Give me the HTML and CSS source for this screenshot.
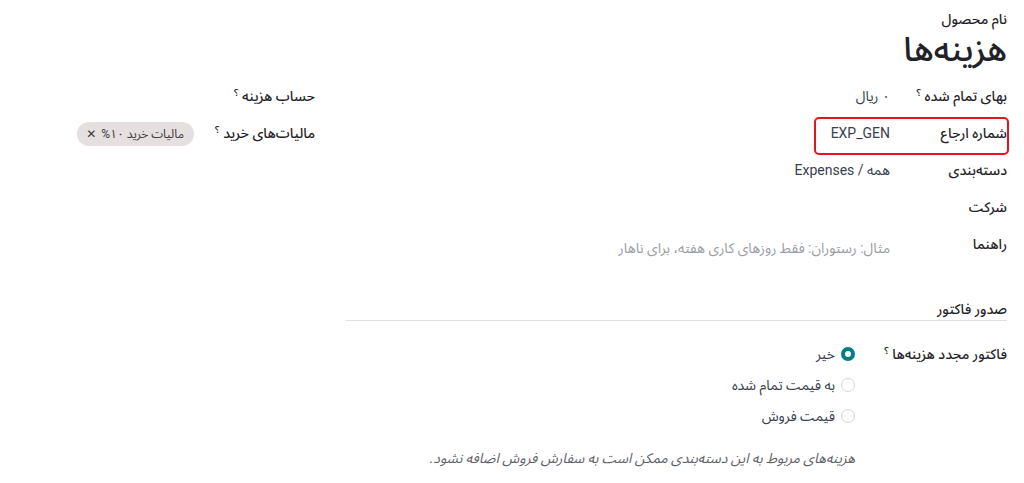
FILE: index.html
```html
<!DOCTYPE html>
<html lang="fa" dir="rtl">
<head>
<meta charset="utf-8">
<link rel="stylesheet" href="styles.css">
</head>
<body>
<div class="sheet">
  <div class="title">
    <div class="title-label">نام محصول</div>
    <h1 class="title-name">هزینه‌ها</h1>
  </div>
  <div class="groups">
    <div class="group group-main">
      <div class="row">
        <div class="lbl">بهای تمام شده <sup class="help">؟</sup></div>
        <div class="val">۰ ریال</div>
      </div>
      <div class="row row-hl">
        <div class="lbl">شماره ارجاع</div>
        <div class="val">EXP_GEN</div>
      </div>
      <div class="row">
        <div class="lbl">دسته‌بندی</div>
        <div class="val">همه / Expenses</div>
      </div>
      <div class="row">
        <div class="lbl">شرکت</div>
        <div class="val"></div>
      </div>
      <div class="row">
        <div class="lbl">راهنما</div>
        <div class="val placeholder">مثال: رستوران: فقط روزهای کاری هفته، برای ناهار</div>
      </div>
    </div>
    <div class="group group-side">
      <div class="row">
        <div class="lbl">حساب هزینه <sup class="help">؟</sup></div>
        <div class="val"></div>
      </div>
      <div class="row">
        <div class="lbl">مالیات‌های خرید <sup class="help">؟</sup></div>
        <div class="val"><span class="tag">مالیات خرید ۱۰% <span class="tag-x">✕</span></span></div>
      </div>
    </div>
  </div>
  <div class="group group-invoice">
    <div class="separator">صدور فاکتور</div>
    <div class="row row-radio">
      <div class="lbl lbl-wide">فاکتور مجدد هزینه‌ها <sup class="help">؟</sup></div>
      <div class="val">
        <div class="radios">
          <label class="radio"><span class="dot dot-on"></span>خیر</label>
          <label class="radio"><span class="dot"></span>به قیمت تمام شده</label>
          <label class="radio"><span class="dot"></span>قیمت فروش</label>
        </div>
        <p class="note">هزینه‌های مربوط به این دسته‌بندی ممکن است به سفارش فروش اضافه نشود.</p>
      </div>
    </div>
  </div>
</div>
</body>
</html>
```
FILE: styles.css
```css
* { box-sizing: border-box; }
html, body { margin: 0; padding: 0; background: #fff; }
body {
  font-family: "Roboto", "Noto Sans Arabic", "Vazirmatn", "DejaVu Sans", sans-serif;
  font-size: 14px;
  color: #1f2328;
  direction: rtl;
}
.sheet {
  padding: 8px 17px 0 0;
  width: 1024px;
}
.title-label {
  font-size: 14px;
  font-weight: 500;
  line-height: 22px;
}
.title-name {
  margin: 0;
  font-size: 34px;
  font-weight: 500;
  line-height: 38px;
}
.groups {
  display: flex;
  gap: 31px;
  margin-top: 17px;
}
.group-main { width: 661px; flex: none; }
.group-side { flex: 1; }
.row {
  display: flex;
  align-items: flex-start;
  min-height: 37px;
}
.lbl {
  width: 117px;
  flex: none;
  font-weight: 500;
  line-height: 22px;
  white-space: nowrap;
}
.group-side .lbl { width: 121px; }
.help {
  font-size: 10px;
  vertical-align: top;
  position: relative;
  top: -3px;
}
.val {
  flex: 1;
  line-height: 22px;
  color: #374151;
}
.placeholder { color: #9a9da3; padding-top: 4px; }
.row-hl {
  position: relative;
}
.row-hl::before {
  content: "";
  position: absolute;
  right: -2px;
  top: -5px;
  width: 191px;
  height: 34px;
  border: 2px solid #e8141c;
  border-radius: 5px;
}
.tag {
  display: inline-flex;
  align-items: center;
  gap: 5px;
  background: #e6dfdf;
  border-radius: 12px;
  padding: 0 10px 0 9px;
  height: 24px;
  font-size: 12px;
  color: #3a3a3a;
  margin-top: -1px;
}
.tag-x { font-size: 12px; font-weight: 700; }
.group-invoice { width: 661px; margin-top: 28px; }
.separator {
  font-weight: 500;
  line-height: 22px;
  padding-bottom: 0;
  border-bottom: 1px solid #dee2e6;
  margin-bottom: 22px;
}
.lbl-wide { width: 152px; }
.radios { display: flex; flex-direction: column; gap: 9px; }
.radio {
  display: flex;
  align-items: center;
  gap: 6px;
  line-height: 22px;
  color: #374151;
}
.dot {
  width: 14px;
  height: 14px;
  border-radius: 50%;
  border: 1px solid #d3d6da;
  background: #fff;
  flex: none;
}
.dot-on {
  border: 4px solid #017e84;
  background: #fff;
}
.note {
  margin: 20px 0 0;
  font-style: italic;
  color: #5f636a;
  font-size: 14px;
}
```
